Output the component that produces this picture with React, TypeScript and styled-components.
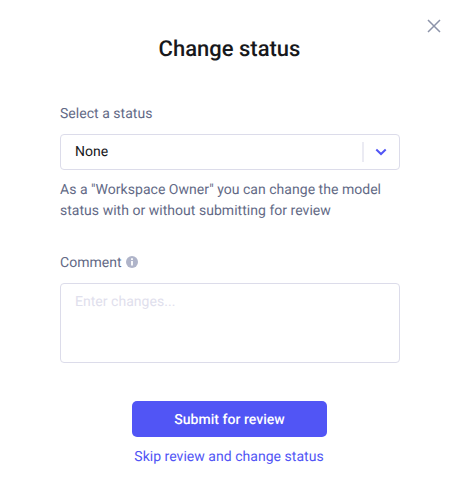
import React from "react";
import styled, { createGlobalStyle } from "styled-components";

const GlobalStyle = createGlobalStyle`
  *, *::before, *::after { box-sizing: border-box; }
  body { margin: 0; background: #fff; font-family: Roboto, sans-serif; text-rendering: geometricPrecision; }
  button, textarea { font-family: inherit; text-rendering: inherit; }
`;

const Dialog = styled.main`
  position: relative;
  width: 460px;
  height: 495px;
  padding: 36px 60px 0;
  background: #fff;
  display: flex;
  flex-direction: column;
`;

const CloseButton = styled.button`
  position: absolute;
  top: 19px;
  right: 19px;
  width: 14px;
  height: 14px;
  padding: 0;
  border: 0;
  background: none;
  svg { display: block; }
`;

const Title = styled.h1`
  margin: 0 1px 0 0;
  font-size: 22px;
  line-height: 28px;
  font-weight: 500;
  color: #18181b;
  text-align: center;
`;

const Field = styled.section<{ $top: number }>`
  display: flex;
  flex-direction: column;
  margin-top: ${({ $top }) => $top}px;
`;

const Label = styled.label`
  display: flex;
  align-items: center;
  gap: 4px;
  height: 20px;
  padding-top: 2px;
  margin-bottom: 11px;
  font-size: 14px;
  letter-spacing: 0.03px;
  color: #636a86;
  svg { margin-bottom: 2px; }
`;

const Select = styled.div`
  display: flex;
  align-items: center;
  height: 36px;
  padding-left: 14px;
  border: 1px solid #dcdcea;
  border-radius: 4px;
  font-size: 14px;
  color: #18181b;
`;

const SelectValue = styled.span`
  flex: 1;
`;

const Indicator = styled.span`
  display: flex;
  align-items: center;
  justify-content: center;
  width: 37px;
  height: 20px;
  padding-right: 1px;
  border-left: 2px solid #ebebf3;
`;

const Hint = styled.p`
  margin: 10px 0 0;
  font-size: 14px;
  line-height: 21px;
  letter-spacing: 0.03px;
  color: #636a86;
`;

const CommentBox = styled.textarea`
  display: block;
  width: 100%;
  height: 80px;
  padding: 9px 14px;
  border: 1px solid #dcdcea;
  border-radius: 4px;
  resize: none;
  outline: none;
  font-size: 14px;
  line-height: 18px;
  letter-spacing: 0.03px;
  &::placeholder { color: #dfe0ed; opacity: 1; }
`;

const Actions = styled.footer`
  display: flex;
  flex-direction: column;
  align-items: center;
  margin-top: 38px;
`;

const SubmitButton = styled.button`
  width: 195px;
  height: 36px;
  margin-right: 1px;
  padding: 2px 0 0;
  border: 0;
  border-radius: 5px;
  background: #5155f5;
  color: #fff;
  font-size: 14px;
  font-weight: 500;
  letter-spacing: 0.03px;
`;

const SkipButton = styled.button`
  margin: 10px 2px 0 0;
  padding: 0;
  border: 0;
  background: none;
  color: #5155f5;
  font-size: 14px;
  line-height: 20px;
  letter-spacing: 0.03px;
`;

export default function App() {
  return (
    <>
      <GlobalStyle />
      <Dialog>
        <CloseButton aria-label="Close">
          <svg width="14" height="14" viewBox="0 0 14 14" fill="none" stroke="#8c93a9" strokeWidth="1.5">
            <path d="M1 1l12 12M13 1L1 13" />
          </svg>
        </CloseButton>
        <Title>Change status</Title>
        <Field $top={39}>
          <Label>Select a status</Label>
          <Select>
            <SelectValue>None</SelectValue>
            <Indicator>
              <svg width="12" height="8" viewBox="0 0 12 8" fill="none" stroke="#5155f5" strokeWidth="2">
                <path d="M1.3 1.5L6 6l4.7-4.5" />
              </svg>
            </Indicator>
          </Select>
          <Hint>As a "Workspace Owner" you can change the model status with or without submitting for review</Hint>
        </Field>
        <Field $top={30}>
          <Label htmlFor="comment">
            Comment
            <svg width="12" height="12" viewBox="0 0 12 12">
              <circle cx="6" cy="6" r="6" fill="#afb4c9" />
              <path d="M6 2.2v1.8M6 5v4.5" stroke="#fff" strokeWidth="1.8" />
            </svg>
          </Label>
          <CommentBox id="comment" placeholder="Enter changes..." />
        </Field>
        <Actions>
          <SubmitButton>Submit for review</SubmitButton>
          <SkipButton>Skip review and change status</SkipButton>
        </Actions>
      </Dialog>
    </>
  );
}
